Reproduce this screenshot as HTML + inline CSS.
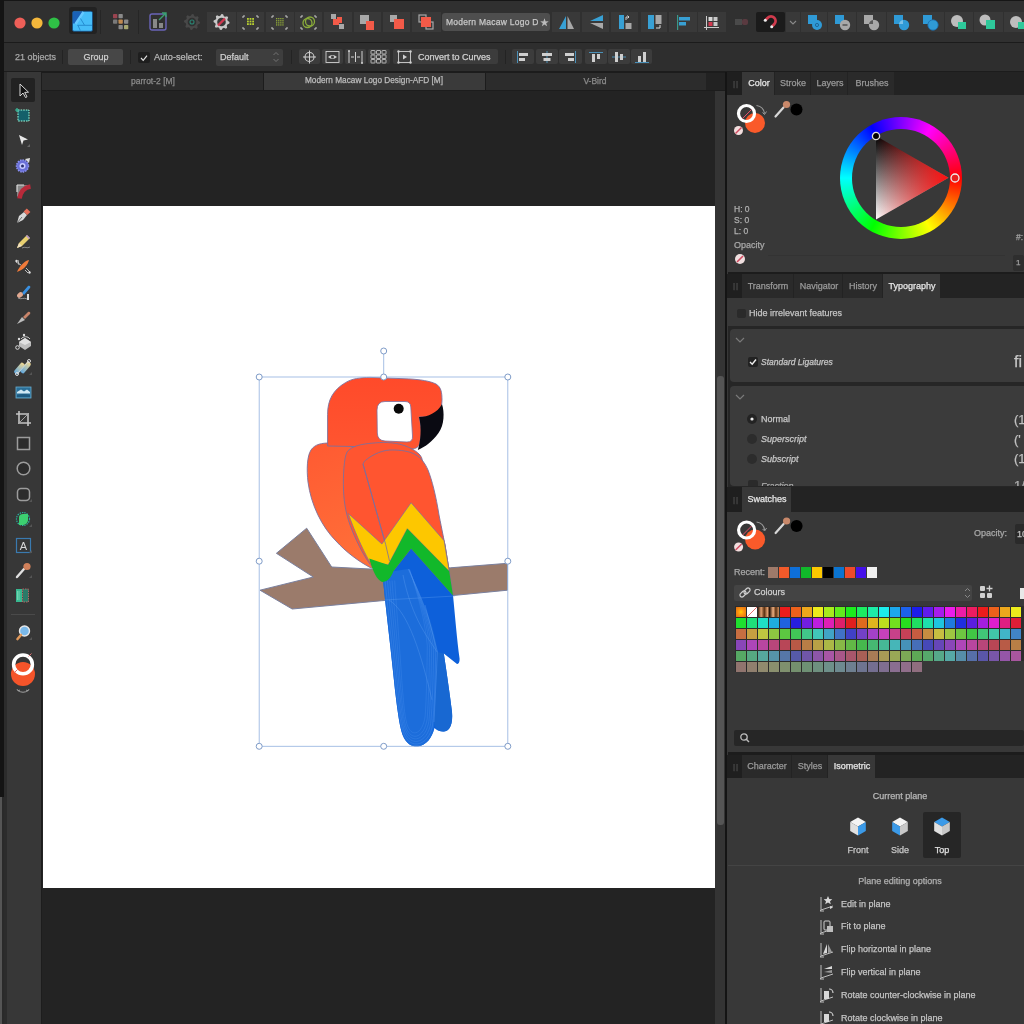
<!DOCTYPE html><html><head><meta charset="utf-8"><style>
html,body{margin:0;padding:0;}
body{width:1024px;height:1024px;overflow:hidden;position:relative;background:#232323;font-family:"Liberation Sans",sans-serif;}
body>div,body>svg{position:absolute;}
.t{white-space:nowrap;line-height:1.2;-webkit-text-stroke:0.25px currentColor;-webkit-font-smoothing:antialiased;will-change:transform;}
</style></head><body>
<div style="left:0px;top:0px;width:1024px;height:43px;background:#303030;"></div>
<div style="left:0px;top:0px;width:1024px;height:1px;background:#161616;"></div>
<div style="left:0px;top:42px;width:1024px;height:1px;background:#1b1b1b;"></div>
<div style="left:0px;top:43px;width:1024px;height:28px;background:#2e2e2e;"></div>
<div style="left:0px;top:71px;width:1024px;height:1.5px;background:#1c1c1c;"></div>
<div style="left:0px;top:0px;width:4px;height:1024px;background:#141414;"></div>
<div style="left:4px;top:72px;width:37px;height:952px;background:#373737;"></div>
<div style="left:4px;top:72px;width:3px;height:952px;background:#2c2c2c;"></div>
<div style="left:0px;top:797px;width:2px;height:227px;background:#555555;"></div>
<div style="left:2px;top:797px;width:2px;height:227px;background:#2a2a2a;"></div>
<div style="left:41px;top:72px;width:1px;height:952px;background:#1d1d1d;"></div>
<div style="left:42px;top:72px;width:684px;height:19px;background:#1c1c1c;"></div>
<div style="left:42px;top:72.5px;width:220.5px;height:17.5px;background:#2c2c2c;"></div>
<div style="left:264px;top:72.5px;width:221px;height:17.5px;background:#3a3a3a;"></div>
<div style="left:486px;top:72.5px;width:220px;height:17.5px;background:#2c2c2c;"></div>
<div style="left:706px;top:72.5px;width:20px;height:17.5px;background:#222222;"></div>
<div class="t" style="left:2.5px;width:300px;text-align:center;top:75.9px;font-size:8.5px;color:#8c8c8c;">parrot-2 [M]</div>
<div class="t" style="left:224px;width:300px;text-align:center;top:76.0px;font-size:8.25px;color:#bcbcbc;">Modern Macaw Logo Design-AFD [M]</div>
<div class="t" style="left:445px;width:300px;text-align:center;top:75.9px;font-size:8.5px;color:#8c8c8c;">V-Bird</div>
<div style="left:42px;top:91px;width:674px;height:933px;background:#232323;"></div>
<div style="left:43px;top:206px;width:672px;height:682px;background:#ffffff;"></div>
<div style="left:715px;top:91px;width:11px;height:933px;background:#343434;"></div>
<div style="left:717px;top:376px;width:7px;height:449px;background:#555555;border-radius:3px;"></div>
<div style="left:725px;top:72px;width:2px;height:952px;background:#141414;"></div>
<div style="left:727px;top:72px;width:297px;height:952px;background:#383838;"></div>
<div style="left:727px;top:72px;width:297px;height:23px;background:#232323;"></div>
<div style="left:727px;top:72px;width:15px;height:23px;background:#1f1f1f;"></div>
<div class="t" style="left:733px;top:78.5px;font-size:8px;color:#4e4e4e;letter-spacing:1px">||</div>
<div style="left:742px;top:72px;width:32px;height:23px;background:#383838;"></div>
<div class="t" style="left:608.5px;width:300px;text-align:center;top:78.1px;font-size:9px;color:#e6e6e6;">Color</div>
<div style="left:775px;top:72px;width:35px;height:23px;background:#2a2a2a;"></div>
<div class="t" style="left:643.0px;width:300px;text-align:center;top:78.1px;font-size:9px;color:#9a9a9a;">Stroke</div>
<div style="left:811px;top:72px;width:36px;height:23px;background:#2a2a2a;"></div>
<div class="t" style="left:679.5px;width:300px;text-align:center;top:78.1px;font-size:9px;color:#9a9a9a;">Layers</div>
<div style="left:848px;top:72px;width:46px;height:23px;background:#2a2a2a;"></div>
<div class="t" style="left:721.5px;width:300px;text-align:center;top:78.1px;font-size:9px;color:#9a9a9a;">Brushes</div>
<div style="left:727px;top:95px;width:297px;height:177px;background:#383838;"></div>
<div style="left:728px;top:272px;width:296px;height:2px;background:#1c1c1c;"></div>
<div style="left:727px;top:274px;width:297px;height:24px;background:#232323;"></div>
<div style="left:727px;top:274px;width:15px;height:24px;background:#1f1f1f;"></div>
<div class="t" style="left:733px;top:281.0px;font-size:8px;color:#4e4e4e;letter-spacing:1px">||</div>
<div style="left:742px;top:274px;width:51px;height:24px;background:#2a2a2a;"></div>
<div class="t" style="left:618.0px;width:300px;text-align:center;top:280.6px;font-size:9px;color:#9a9a9a;">Transform</div>
<div style="left:794px;top:274px;width:48px;height:24px;background:#2a2a2a;"></div>
<div class="t" style="left:668.5px;width:300px;text-align:center;top:280.6px;font-size:9px;color:#9a9a9a;">Navigator</div>
<div style="left:843px;top:274px;width:39px;height:24px;background:#2a2a2a;"></div>
<div class="t" style="left:713.0px;width:300px;text-align:center;top:280.6px;font-size:9px;color:#9a9a9a;">History</div>
<div style="left:883px;top:274px;width:57px;height:24px;background:#383838;"></div>
<div class="t" style="left:762.0px;width:300px;text-align:center;top:280.6px;font-size:9px;color:#e6e6e6;">Typography</div>
<div style="left:727px;top:298px;width:297px;height:28px;background:#383838;"></div>
<div style="left:728px;top:326px;width:296px;height:161px;background:#262626;"></div>
<div style="left:730px;top:329px;width:294px;height:53px;background:#3b3b3b;border-radius:4px 0 0 4px;"></div>
<div style="left:730px;top:386px;width:294px;height:100px;background:#3b3b3b;border-radius:4px 0 0 4px;"></div>
<div style="left:727px;top:487px;width:297px;height:25px;background:#232323;"></div>
<div style="left:727px;top:487px;width:15px;height:25px;background:#1f1f1f;"></div>
<div class="t" style="left:733px;top:494.5px;font-size:8px;color:#4e4e4e;letter-spacing:1px">||</div>
<div style="left:742px;top:487px;width:49px;height:25px;background:#383838;"></div>
<div class="t" style="left:617.0px;width:300px;text-align:center;top:494.1px;font-size:9px;color:#e6e6e6;">Swatches</div>
<div style="left:727px;top:512px;width:297px;height:240px;background:#383838;"></div>
<div style="left:728px;top:752px;width:296px;height:3px;background:#1c1c1c;"></div>
<div style="left:727px;top:755px;width:297px;height:23px;background:#232323;"></div>
<div style="left:727px;top:755px;width:15px;height:23px;background:#1f1f1f;"></div>
<div class="t" style="left:733px;top:761.5px;font-size:8px;color:#4e4e4e;letter-spacing:1px">||</div>
<div style="left:742px;top:755px;width:49px;height:23px;background:#2a2a2a;"></div>
<div class="t" style="left:617.0px;width:300px;text-align:center;top:761.1px;font-size:9px;color:#9a9a9a;">Character</div>
<div style="left:792px;top:755px;width:35px;height:23px;background:#2a2a2a;"></div>
<div class="t" style="left:660.0px;width:300px;text-align:center;top:761.1px;font-size:9px;color:#9a9a9a;">Styles</div>
<div style="left:828px;top:755px;width:47px;height:23px;background:#383838;"></div>
<div class="t" style="left:702.0px;width:300px;text-align:center;top:761.1px;font-size:9px;color:#e6e6e6;">Isometric</div>
<div style="left:727px;top:778px;width:297px;height:246px;background:#383838;"></div>
<div style="left:728px;top:865px;width:296px;height:1px;background:#444444;"></div>
<svg style="left:10px;top:13px;" width="54" height="20" viewBox="0 0 54 20"><circle cx="10" cy="10" r="5.6" fill="#ee5f58"/><circle cx="27" cy="10" r="5.6" fill="#f4b73b"/><circle cx="44" cy="10" r="5.6" fill="#2fc046"/></svg>
<div style="left:68.8px;top:7px;width:28px;height:27px;background:#222222;border-radius:3px;"></div>
<svg style="left:72px;top:10px;" width="21" height="22" viewBox="0 0 21 22"><rect x="0.5" y="1.3" width="20" height="20" rx="1.5" fill="#46bdf8" stroke="#174a80" stroke-width="0.8"/><path d="M1 1.8 L11 1.8 L3 13.5 L1 13.5 Z" fill="#1a62b8"/><path d="M3.5 14 L11.5 2" stroke="#66c8ff" stroke-width="2.4"/><path d="M8.5 8.5 L12.5 15.2 M5.5 15.3 H20 M5.8 15 L8.3 20.5" fill="none" stroke="#2288cc" stroke-width="0.9"/></svg>
<div style="left:100px;top:10px;width:1px;height:24px;background:#262626;"></div>
<svg style="left:113px;top:14px;" width="17" height="17" viewBox="0 0 17 17"><rect x="0.0" y="0.0" width="4.3" height="4.3" rx="0.8" fill="#9a4450"/><rect x="5.5" y="0.0" width="4.3" height="4.3" rx="0.8" fill="#8a8a8a"/><rect x="0.0" y="5.5" width="4.3" height="4.3" rx="0.8" fill="#7a7a7a"/><rect x="5.5" y="5.5" width="4.3" height="4.3" rx="0.8" fill="#c08a50"/><rect x="11.0" y="5.5" width="4.3" height="4.3" rx="0.8" fill="#8a8a8a"/><rect x="5.5" y="11.0" width="4.3" height="4.3" rx="0.8" fill="#8a8a8a"/><rect x="11.0" y="11.0" width="4.3" height="4.3" rx="0.8" fill="#a8a870"/></svg>
<div style="left:138px;top:10px;width:1px;height:24px;background:#262626;"></div>
<svg style="left:149px;top:12px;" width="20" height="20" viewBox="0 0 20 20"><rect x="1" y="2" width="16" height="16" rx="2" fill="none" stroke="#6a64b8" stroke-width="1.4"/><rect x="4" y="7" width="4" height="9" fill="#888"/><rect x="10" y="11" width="4" height="5" fill="#888"/><path d="M10 8 L17 1 M13 1 h4 v4" fill="none" stroke="#3aa070" stroke-width="1.4"/></svg>
<svg style="left:183px;top:13px;" width="18" height="18" viewBox="0 0 18 18"><polygon points="17.00,9.00 16.85,10.56 14.82,11.41 14.24,12.50 14.66,14.66 13.44,15.65 11.41,14.82 10.23,15.18 9.00,17.00 7.44,16.85 6.59,14.82 5.50,14.24 3.34,14.66 2.35,13.44 3.18,11.41 2.82,10.23 1.00,9.00 1.15,7.44 3.18,6.59 3.76,5.50 3.34,3.34 4.56,2.35 6.59,3.18 7.77,2.82 9.00,1.00 10.56,1.15 11.41,3.18 12.50,3.76 14.66,3.34 15.65,4.56 14.82,6.59 15.18,7.77" fill="#484848"/><circle cx="9" cy="9" r="4.3" fill="#303030"/><circle cx="9" cy="9" r="2" fill="none" stroke="#2a8070" stroke-width="1.1"/></svg>
<div style="left:207px;top:12px;width:29px;height:20px;background:#393939;"></div>
<div style="left:236.5px;top:12px;width:27.5px;height:20px;background:#393939;"></div>
<div style="left:265.5px;top:12px;width:28.5px;height:20px;background:#393939;"></div>
<div style="left:295px;top:12px;width:27px;height:20px;background:#393939;"></div>
<div style="left:324px;top:12px;width:28px;height:20px;background:#393939;"></div>
<div style="left:353.5px;top:12px;width:27.5px;height:20px;background:#393939;"></div>
<div style="left:383px;top:12px;width:27px;height:20px;background:#393939;"></div>
<div style="left:412px;top:12px;width:28.5px;height:20px;background:#393939;"></div>
<svg style="left:212px;top:13px;" width="20" height="18" viewBox="0 0 20 18"><polygon points="17.50,9.00 17.35,10.56 15.32,11.41 14.74,12.50 15.16,14.66 13.94,15.65 11.91,14.82 10.73,15.18 9.50,17.00 7.94,16.85 7.09,14.82 6.00,14.24 3.84,14.66 2.85,13.44 3.68,11.41 3.32,10.23 1.50,9.00 1.65,7.44 3.68,6.59 4.26,5.50 3.84,3.34 5.06,2.35 7.09,3.18 8.27,2.82 9.50,1.00 11.06,1.15 11.91,3.18 13.00,3.76 15.16,3.34 16.15,4.56 15.32,6.59 15.68,7.77" fill="#c8c8c8"/><circle cx="9.5" cy="9" r="4.3" fill="#393939"/><line x1="6" y1="12.5" x2="13" y2="5.5" stroke="#d03850" stroke-width="2.4"/></svg>
<svg style="left:241px;top:13px;" width="19" height="19" viewBox="0 0 19 19"><rect x="6.0" y="5.0" width="1.8" height="1.8" fill="#b8d030"/><rect x="6.0" y="7.6" width="1.8" height="1.8" fill="#b8d030"/><rect x="6.0" y="10.2" width="1.8" height="1.8" fill="#b8d030"/><rect x="8.6" y="5.0" width="1.8" height="1.8" fill="#b8d030"/><rect x="8.6" y="7.6" width="1.8" height="1.8" fill="#b8d030"/><rect x="8.6" y="10.2" width="1.8" height="1.8" fill="#b8d030"/><rect x="11.2" y="5.0" width="1.8" height="1.8" fill="#b8d030"/><rect x="11.2" y="7.6" width="1.8" height="1.8" fill="#b8d030"/><rect x="11.2" y="10.2" width="1.8" height="1.8" fill="#b8d030"/><path d="M2 3 h2 M2 3 v2 M17 3 h-2 M17 3 v2 M2 16 h2 M2 16 v-2 M17 16 h-2 M17 16 v-2" stroke="#c8c8c8" stroke-width="1"/></svg>
<svg style="left:270px;top:13px;" width="19" height="19" viewBox="0 0 19 19"><rect x="6.0" y="5.0" width="1.3" height="1.3" fill="#90a838"/><rect x="6.0" y="7.1" width="1.3" height="1.3" fill="#90a838"/><rect x="6.0" y="9.2" width="1.3" height="1.3" fill="#90a838"/><rect x="6.0" y="11.3" width="1.3" height="1.3" fill="#90a838"/><rect x="8.1" y="5.0" width="1.3" height="1.3" fill="#90a838"/><rect x="8.1" y="7.1" width="1.3" height="1.3" fill="#90a838"/><rect x="8.1" y="9.2" width="1.3" height="1.3" fill="#90a838"/><rect x="8.1" y="11.3" width="1.3" height="1.3" fill="#90a838"/><rect x="10.2" y="5.0" width="1.3" height="1.3" fill="#90a838"/><rect x="10.2" y="7.1" width="1.3" height="1.3" fill="#90a838"/><rect x="10.2" y="9.2" width="1.3" height="1.3" fill="#90a838"/><rect x="10.2" y="11.3" width="1.3" height="1.3" fill="#90a838"/><rect x="12.3" y="5.0" width="1.3" height="1.3" fill="#90a838"/><rect x="12.3" y="7.1" width="1.3" height="1.3" fill="#90a838"/><rect x="12.3" y="9.2" width="1.3" height="1.3" fill="#90a838"/><rect x="12.3" y="11.3" width="1.3" height="1.3" fill="#90a838"/><path d="M2 3 h2 M2 3 v2 M17 3 h-2 M17 3 v2 M2 16 h2 M2 16 v-2 M17 16 h-2 M17 16 v-2" stroke="#c8c8c8" stroke-width="1"/></svg>
<svg style="left:299px;top:13px;" width="19" height="19" viewBox="0 0 19 19"><circle cx="8.5" cy="10" r="4.5" fill="none" stroke="#8aac3a" stroke-width="1.3"/><circle cx="11" cy="8.5" r="4.5" fill="none" stroke="#8aac3a" stroke-width="1.3"/><path d="M2 3 h2 M2 3 v2 M17 3 h-2 M17 3 v2 M2 16 h2 M2 16 v-2 M17 16 h-2 M17 16 v-2" stroke="#c8c8c8" stroke-width="1"/></svg>
<svg style="left:328px;top:13px;" width="20" height="18" viewBox="0 0 20 18"><rect x="3" y="1" width="5" height="5" fill="#a8a8a8"/><rect x="5" y="6" width="6" height="6" fill="#f25a48"/><rect x="9" y="4" width="5" height="6" fill="#f25a48"/><rect x="11" y="11" width="5" height="5" fill="#a8a8a8"/></svg>
<svg style="left:357px;top:13px;" width="20" height="18" viewBox="0 0 20 18"><rect x="3" y="2" width="9" height="9" fill="#a8a8a8"/><rect x="9" y="8" width="8" height="9" fill="#f25a48"/></svg>
<svg style="left:387px;top:13px;" width="20" height="18" viewBox="0 0 20 18"><rect x="3" y="2" width="7" height="7" fill="#a8a8a8"/><rect x="7" y="6" width="10" height="10" fill="#f25a48"/></svg>
<svg style="left:416px;top:13px;" width="20" height="18" viewBox="0 0 20 18"><rect x="3" y="2" width="7" height="7" fill="none" stroke="#a8a8a8" stroke-width="1.2"/><rect x="10" y="9" width="7" height="7" fill="none" stroke="#a8a8a8" stroke-width="1.2"/><rect x="5" y="4" width="10" height="10" fill="#f25a48"/></svg>
<div style="left:442.4px;top:13px;width:108px;height:18px;background:#4e4e4e;border-radius:3px;"></div>
<div class="t" style="left:445.5px;top:17.4px;font-size:8.5px;color:#c8c8c8;width:91.5px;overflow:hidden;letter-spacing:0.25px;">Modern Macaw Logo Design</div>
<div class="t" style="left:539.5px;top:16.8px;font-size:9.5px;color:#bdbdbd;">&#9733;</div>
<div style="left:552px;top:12px;width:28px;height:20px;background:#393939;"></div>
<div style="left:582px;top:12px;width:27px;height:20px;background:#393939;"></div>
<div style="left:610.6px;top:12px;width:27.399999999999977px;height:20px;background:#393939;"></div>
<div style="left:640.7px;top:12px;width:26.299999999999955px;height:20px;background:#393939;"></div>
<div style="left:669px;top:12px;width:28px;height:20px;background:#393939;"></div>
<div style="left:698px;top:12px;width:28px;height:20px;background:#393939;"></div>
<svg style="left:552px;top:12px;" width="28" height="20" viewBox="0 0 28 20"><path d="M14 4 L14 17 L7 17 Z" fill="#38a0d4"/><path d="M15.5 4 L15.5 17 L22 17 Z" fill="#a8a8a8"/></svg>
<svg style="left:582px;top:12px;" width="27" height="20" viewBox="0 0 27 20"><path d="M21 3 L21 9 L8 9 Z" fill="#38a0d4"/><path d="M21 11 L21 17 L8 11 Z" fill="#a8a8a8"/></svg>
<svg style="left:610.6px;top:12px;" width="28" height="20" viewBox="0 0 28 20"><rect x="8" y="3" width="5" height="14" fill="#38a0d4"/><rect x="14.5" y="11" width="6" height="6" fill="#a8a8a8"/><path d="M15 8 v-3 h3 l-1.5 -1.5 M18 5 l-1.5 1.5" fill="none" stroke="#ddd" stroke-width="0.9"/></svg>
<svg style="left:640.7px;top:12px;" width="27" height="20" viewBox="0 0 27 20"><rect x="7" y="3" width="6" height="14" fill="#38a0d4"/><rect x="14.5" y="3" width="6" height="9" fill="#a8a8a8"/><path d="M19 13 v3 h-4" fill="none" stroke="#ddd" stroke-width="1"/></svg>
<svg style="left:669px;top:12px;" width="28" height="20" viewBox="0 0 28 20"><rect x="8" y="3" width="1.2" height="15" fill="#3a9a8a"/><rect x="10" y="5" width="11" height="3.5" fill="#38a0d4"/><rect x="10" y="10" width="7" height="3.5" fill="#38a0d4"/></svg>
<svg style="left:698px;top:12px;" width="28" height="20" viewBox="0 0 28 20"><rect x="8" y="4" width="1" height="14" fill="#ccc"/><rect x="6" y="15" width="15" height="1" fill="#ccc"/><rect x="10.5" y="5" width="4" height="4" fill="#d8d8d8"/><rect x="15.5" y="5" width="4" height="4" fill="#c8c8c8"/><rect x="10.5" y="10" width="4" height="4" fill="#d03a50"/><rect x="15.5" y="10" width="4" height="4" fill="#c8c8c8"/></svg>
<svg style="left:733px;top:15px;" width="18" height="14" viewBox="0 0 18 14"><rect x="2" y="4" width="7" height="6" fill="#4a4a4a"/><rect x="9" y="4" width="6" height="6" rx="2" fill="#5a3a40"/></svg>
<div style="left:756px;top:12px;width:29px;height:20px;background:#1b1b1b;border-radius:2px;"></div>
<svg style="left:760px;top:12px;" width="22" height="20" viewBox="0 0 22 20"><path d="M5.7 7.9 L7.8 5.8 A4.5 4.5 0 0 1 14.2 12.2 L12.1 14.3" fill="none" stroke="#d03a4c" stroke-width="2.8"/><circle cx="5.3" cy="8.3" r="1.5" fill="#eee"/><circle cx="11.7" cy="14.7" r="1.5" fill="#eee"/></svg>
<div style="left:786px;top:12px;width:14px;height:20px;background:#393939;"></div>
<svg style="left:788px;top:17px;" width="10" height="10" viewBox="0 0 10 10"><path d="M2 4 L5 7 L8 4" fill="none" stroke="#8a8a8a" stroke-width="1.1"/></svg>
<div style="left:801px;top:12px;width:26px;height:20px;background:#393939;"></div>
<div style="left:828px;top:12px;width:28px;height:20px;background:#393939;"></div>
<div style="left:857px;top:12px;width:29px;height:20px;background:#393939;"></div>
<div style="left:887px;top:12px;width:28.5px;height:20px;background:#393939;"></div>
<div style="left:916px;top:12px;width:28px;height:20px;background:#393939;"></div>
<div style="left:945px;top:12px;width:28px;height:20px;background:#393939;"></div>
<div style="left:973.5px;top:12px;width:29.5px;height:20px;background:#393939;"></div>
<div style="left:1004px;top:12px;width:26px;height:20px;background:#393939;"></div>
<svg style="left:801px;top:12px;" width="26" height="20" viewBox="0 0 26 20"><rect x="7" y="3" width="9" height="9" fill="#2f9ad6"/><circle cx="16" cy="13" r="5" fill="#2f9ad6"/><circle cx="16" cy="13" r="1.6" fill="none" stroke="#1a5a8a" stroke-width="0.8"/></svg>
<svg style="left:828px;top:12px;" width="28" height="20" viewBox="0 0 28 20"><rect x="7" y="3" width="9" height="9" fill="#2f9ad6"/><circle cx="17" cy="13" r="5.2" fill="#a8a8a8"/><line x1="14.5" y1="13" x2="19.5" y2="13" stroke="#333" stroke-width="1.1"/></svg>
<svg style="left:857px;top:12px;" width="29" height="20" viewBox="0 0 29 20"><rect x="7" y="3" width="9" height="9" fill="#a8a8a8"/><circle cx="17" cy="13" r="5.2" fill="#a8a8a8"/><path d="M12 12 L16 12 L16 8 A5.2 5.2 0 0 0 12 12Z" fill="#5a5a5a"/></svg>
<svg style="left:887px;top:12px;" width="28" height="20" viewBox="0 0 28 20"><rect x="7" y="3" width="9" height="9" fill="#2f9ad6"/><circle cx="17" cy="13" r="5.2" fill="#2f9ad6"/><path d="M12 12 L16 12 L16 8 A5.2 5.2 0 0 0 12 12Z" fill="#7ac0e8"/></svg>
<svg style="left:916px;top:12px;" width="28" height="20" viewBox="0 0 28 20"><rect x="7" y="3" width="9" height="9" fill="#2f9ad6"/><circle cx="17" cy="13" r="5.2" fill="#2f9ad6"/><circle cx="17" cy="13" r="5.2" fill="none" stroke="#1a6aa8" stroke-width="0.8"/></svg>
<svg style="left:945px;top:12px;" width="28" height="20" viewBox="0 0 28 20"><circle cx="12" cy="9" r="6" fill="#bdbdbd"/><rect x="13" y="10" width="8" height="7" fill="#2ec89a"/></svg>
<svg style="left:973.5px;top:12px;" width="29" height="20" viewBox="0 0 29 20"><circle cx="11" cy="8" r="5.5" fill="#bdbdbd"/><rect x="12" y="8" width="9" height="9" fill="#2ec89a"/></svg>
<svg style="left:1004px;top:12px;" width="20" height="20" viewBox="0 0 20 20"><circle cx="12" cy="10" r="6" fill="#bdbdbd"/><rect x="14" y="10" width="8" height="7" fill="#2ec89a"/></svg>
<div class="t" style="left:14.6px;top:52.1px;font-size:9px;color:#a8a8a8;">21 objects</div>
<div style="left:62px;top:50px;width:1px;height:14px;background:#232323;"></div>
<div style="left:68px;top:49px;width:55px;height:16px;background:#474747;border-radius:2px;"></div>
<div class="t" style="left:-54.5px;width:300px;text-align:center;top:51.9px;font-size:9px;color:#cfcfcf;">Group</div>
<div style="left:130px;top:50px;width:1px;height:14px;background:#232323;"></div>
<div style="left:138px;top:51.7px;width:11.5px;height:11.5px;background:#1e1e1e;border-radius:2px;"></div>
<svg style="left:138px;top:51.7px;" width="12" height="12" viewBox="0 0 12 12"><path d="M3 6 L5.2 8.3 L9 3.6" fill="none" stroke="#e0e0e0" stroke-width="1.2"/></svg>
<div class="t" style="left:154px;top:52.0px;font-size:9.2px;color:#b8b8b8;">Auto-select:</div>
<div style="left:216px;top:49px;width:67px;height:17px;background:#3e3e3e;border-radius:2px;"></div>
<div class="t" style="left:220px;top:51.6px;font-size:9px;color:#cfcfcf;">Default</div>
<svg style="left:271px;top:50px;" width="10" height="14" viewBox="0 0 10 14"><path d="M2.5 5 L5 2.5 L7.5 5 M2.5 9 L5 11.5 L7.5 9" fill="none" stroke="#777" stroke-width="0.9"/></svg>
<div style="left:291px;top:50px;width:1px;height:14px;background:#232323;"></div>
<div style="left:299px;top:48.6px;width:21px;height:15.6px;background:#3c3c3c;border-radius:2px;"></div>
<div style="left:322px;top:48.6px;width:21px;height:15.6px;background:#3c3c3c;border-radius:2px;"></div>
<div style="left:345px;top:48.6px;width:21px;height:15.6px;background:#3c3c3c;border-radius:2px;"></div>
<div style="left:368px;top:48.6px;width:22px;height:15.6px;background:#3c3c3c;border-radius:2px;"></div>
<div style="left:393px;top:48.6px;width:104.5px;height:15.6px;background:#3c3c3c;border-radius:2px;"></div>
<svg style="left:299px;top:48.6px;" width="21" height="16" viewBox="0 0 21 16"><circle cx="10.5" cy="8" r="4.5" fill="none" stroke="#d0d0d0" stroke-width="1.1"/><path d="M10.5 1.5 v13 M4 8 h13" stroke="#d0d0d0" stroke-width="1"/></svg>
<svg style="left:322px;top:48.6px;" width="21" height="16" viewBox="0 0 21 16"><rect x="4" y="2.5" width="13" height="11" fill="none" stroke="#d0d0d0" stroke-width="0.9"/><path d="M6 8 Q10.5 4 15 8 Q10.5 12 6 8Z" fill="#d0d0d0"/><circle cx="10.5" cy="8" r="1.5" fill="#3c3c3c"/></svg>
<svg style="left:345px;top:48.6px;" width="21" height="16" viewBox="0 0 21 16"><path d="M4 2 v12 M17 2 v12 M10.5 3 v10" stroke="#d0d0d0" stroke-width="1" /><path d="M6 8 h3 M12 8 h3" stroke="#d0d0d0" stroke-width="1"/><circle cx="4" cy="2" r="1" fill="#d0d0d0"/><circle cx="17" cy="14" r="1" fill="#d0d0d0"/></svg>
<svg style="left:368px;top:48.6px;" width="22" height="16" viewBox="0 0 22 16"><rect x="3.0" y="1.5" width="4" height="3.5" rx="0.5" fill="none" stroke="#d0d0d0" stroke-width="0.8"/><rect x="3.0" y="6.0" width="4" height="3.5" rx="0.5" fill="none" stroke="#d0d0d0" stroke-width="0.8"/><rect x="3.0" y="10.5" width="4" height="3.5" rx="0.5" fill="none" stroke="#d0d0d0" stroke-width="0.8"/><rect x="8.5" y="1.5" width="4" height="3.5" rx="0.5" fill="none" stroke="#d0d0d0" stroke-width="0.8"/><rect x="8.5" y="6.0" width="4" height="3.5" rx="0.5" fill="none" stroke="#d0d0d0" stroke-width="0.8"/><rect x="8.5" y="10.5" width="4" height="3.5" rx="0.5" fill="none" stroke="#d0d0d0" stroke-width="0.8"/><rect x="14.0" y="1.5" width="4" height="3.5" rx="0.5" fill="none" stroke="#d0d0d0" stroke-width="0.8"/><rect x="14.0" y="6.0" width="4" height="3.5" rx="0.5" fill="none" stroke="#d0d0d0" stroke-width="0.8"/><rect x="14.0" y="10.5" width="4" height="3.5" rx="0.5" fill="none" stroke="#d0d0d0" stroke-width="0.8"/></svg>
<svg style="left:395px;top:48.6px;" width="20" height="16" viewBox="0 0 20 16"><rect x="3.5" y="2.5" width="12" height="11" fill="none" stroke="#d0d0d0" stroke-width="0.9"/><path d="M8 5.5 L12 8 L8 10.5Z" fill="#d0d0d0"/><circle cx="3.5" cy="2.5" r="1.2" fill="#d0d0d0"/><circle cx="15.5" cy="2.5" r="1.2" fill="#d0d0d0"/><circle cx="3.5" cy="13.5" r="1.2" fill="#d0d0d0"/><circle cx="15.5" cy="13.5" r="1.2" fill="#d0d0d0"/></svg>
<div class="t" style="left:418px;top:51.6px;font-size:9px;color:#d0d0d0;">Convert to Curves</div>
<div style="left:504.6px;top:50px;width:1px;height:14px;background:#232323;"></div>
<div style="left:512px;top:48.6px;width:22px;height:15.6px;background:#3c3c3c;border-radius:2px;"></div>
<div style="left:536px;top:48.6px;width:22px;height:15.6px;background:#3c3c3c;border-radius:2px;"></div>
<div style="left:559px;top:48.6px;width:23px;height:15.6px;background:#3c3c3c;border-radius:2px;"></div>
<div style="left:585px;top:48.6px;width:22px;height:15.6px;background:#3c3c3c;border-radius:2px;"></div>
<div style="left:607.5px;top:48.6px;width:22.5px;height:15.6px;background:#3c3c3c;border-radius:2px;"></div>
<div style="left:631px;top:48.6px;width:21px;height:15.6px;background:#3c3c3c;border-radius:2px;"></div>
<svg style="left:512px;top:48.6px;" width="22" height="16" viewBox="0 0 22 16"><rect x="5" y="2" width="1" height="12" fill="#4a90b8"/><rect x="7" y="4" width="9" height="3" fill="#cfcfcf"/><rect x="7" y="9" width="6" height="3" fill="#cfcfcf"/></svg>
<svg style="left:536px;top:48.6px;" width="22" height="16" viewBox="0 0 22 16"><rect x="10.5" y="2" width="1" height="12" fill="#4a90b8"/><rect x="6" y="4" width="10" height="3" fill="#cfcfcf"/><rect x="7.5" y="9" width="7" height="3" fill="#cfcfcf"/></svg>
<svg style="left:559px;top:48.6px;" width="23" height="16" viewBox="0 0 23 16"><rect x="16" y="2" width="1" height="12" fill="#4a90b8"/><rect x="6" y="4" width="9" height="3" fill="#cfcfcf"/><rect x="9" y="9" width="6" height="3" fill="#cfcfcf"/></svg>
<svg style="left:585px;top:48.6px;" width="22" height="16" viewBox="0 0 22 16"><rect x="4" y="3" width="14" height="1" fill="#4a90b8"/><rect x="7" y="5" width="3" height="8" fill="#cfcfcf"/><rect x="12" y="5" width="3" height="5" fill="#cfcfcf"/></svg>
<svg style="left:607.5px;top:48.6px;" width="22" height="16" viewBox="0 0 22 16"><rect x="4" y="7.5" width="14" height="1" fill="#4a90b8"/><rect x="7" y="3" width="3" height="10" fill="#cfcfcf"/><rect x="12" y="5" width="3" height="6" fill="#cfcfcf"/></svg>
<svg style="left:631px;top:48.6px;" width="21" height="16" viewBox="0 0 21 16"><rect x="4" y="13" width="14" height="1" fill="#4a90b8"/><rect x="7" y="7" width="3" height="6" fill="#cfcfcf"/><rect x="12" y="3" width="3" height="10" fill="#cfcfcf"/></svg>
<div style="left:11px;top:78px;width:24px;height:23.5px;background:#222222;border-radius:2px;"></div>
<svg style="left:14.0px;top:80.5px;" width="18" height="18" viewBox="0 0 18 18"><path d="M6 3 L6 15 L9 12 L11.5 16.5 L13 15.8 L10.7 11.4 L14.5 11.2 Z" fill="#111" stroke="#d8d8d8" stroke-width="1"/></svg>
<svg style="left:14.0px;top:105.6px;" width="18" height="18" viewBox="0 0 18 18"><rect x="4" y="4" width="11" height="11" fill="#14606a" stroke="#9fd" stroke-width="1" stroke-dasharray="1.6 1"/><path d="M1 4 h4 M3 2 v4" stroke="#3ac0a0" stroke-width="1.2"/></svg>
<svg style="left:14.0px;top:131.3px;" width="18" height="18" viewBox="0 0 18 18"><path d="M5 4 L14 8.5 L9.5 9.5 L8 14 Z" fill="#e8e8e8"/><path d="M13 16 L16 13 L16 16Z" fill="#666"/></svg>
<svg style="left:14.0px;top:156.2px;" width="18" height="18" viewBox="0 0 18 18"><circle cx="8.5" cy="10" r="6" fill="#6a70d8" stroke="#8a90f0" stroke-width="1.5" stroke-dasharray="1.5 1"/><circle cx="8.5" cy="10" r="3" fill="#c8ccff"/><circle cx="8.5" cy="10" r="1.5" fill="#2a2f70"/><path d="M11 3 L16 2 L15 7Z" fill="#ddd"/></svg>
<svg style="left:14.0px;top:181.8px;" width="18" height="18" viewBox="0 0 18 18"><path d="M3 3 L3 15 L8 10 C9 7 11 5 16 3 Z" fill="#888" /><path d="M3 3 h7 M3 3 v7" stroke="#ddd" stroke-width="1.2"/><path d="M5.5 16.5 C6.5 10 10.5 5.5 16.5 4.5" fill="none" stroke="#b82a3a" stroke-width="4.6"/></svg>
<svg style="left:14.0px;top:206.7px;" width="18" height="18" viewBox="0 0 18 18"><path d="M3 16 L5 9 L10 5 L13 8 L9 13 Z" fill="#d8d8d8"/><path d="M3 16 L8 10" stroke="#555" stroke-width="0.8"/><rect x="10.5" y="2.5" width="5" height="4.5" transform="rotate(45 13 4.75)" fill="#e8705a"/></svg>
<svg style="left:14.0px;top:231.6px;" width="18" height="18" viewBox="0 0 18 18"><path d="M3 16 L5 11 L13 3 L16 6 L8 14 Z" fill="#e8d070"/><path d="M3 16 L5 11 L8 14Z" fill="#f0e0c0"/><path d="M13 3 L16 6 L15 7 L12 4Z" fill="#b090d0"/><path d="M8 16 C11 14 13 17 16 15" fill="none" stroke="#999" stroke-width="0.8"/></svg>
<svg style="left:14.0px;top:257.0px;" width="18" height="18" viewBox="0 0 18 18"><path d="M3 15 C5 10 10 4 15 3 C14 8 9 13 3 15Z" fill="#f07a3a"/><path d="M2 5 L7 8 M4 3 L5 8 M12 11 L16 15 M11 13 L14 16" stroke="#bbb" stroke-width="1"/><circle cx="2.5" cy="4" r="1.2" fill="#ddd"/><circle cx="15.5" cy="15.5" r="1.2" fill="#ddd"/></svg>
<svg style="left:14.0px;top:283.0px;" width="18" height="18" viewBox="0 0 18 18"><path d="M8 10 L14 3 C16 2 17 4 16 5 L10 12Z" fill="#3a90e0"/><ellipse cx="6" cy="12" rx="3.2" ry="2.4" transform="rotate(-40 6 12)" fill="#e0a890"/><path d="M4 15 C7 17 10 14 13 16" fill="none" stroke="#aaa" stroke-width="0.8"/><rect x="13" y="11" width="2" height="6" fill="#ddd"/></svg>
<svg style="left:14.0px;top:308.0px;" width="18" height="18" viewBox="0 0 18 18"><path d="M9 9 L14 4 C15.5 3 17 4.5 16 6 L11 11Z" fill="#c8846a"/><path d="M3 16 L8 9 L11 12 Z" fill="#bdbdbd"/></svg>
<svg style="left:14.0px;top:333.0px;" width="18" height="18" viewBox="0 0 18 18"><path d="M5 9 L11 5 L17 9 L17 13 L11 17 L5 13 Z" fill="#bdbdbd"/><path d="M5 9 L11 5 L17 9 L11 12Z" fill="#e0e0e0"/><path d="M7 6 C9 3 14 3 16 6" fill="none" stroke="#ccc" stroke-width="1"/><circle cx="3.5" cy="14.5" r="1.8" fill="none" stroke="#ddd" stroke-width="1"/><circle cx="5" cy="6" r="1.2" fill="#ddd"/><circle cx="10" cy="2" r="1.2" fill="#ddd"/></svg>
<svg style="left:14.0px;top:358.0px;" width="18" height="18" viewBox="0 0 18 18"><defs><linearGradient id="tg1" x1="0" y1="0" x2="0" y2="1"><stop offset="0" stop-color="#f0d890"/><stop offset="1" stop-color="#60a8e0"/></linearGradient></defs><rect x="3" y="4" width="5" height="13" rx="2" transform="rotate(40 5.5 10.5)" fill="url(#tg1)"/><rect x="9" y="3" width="5" height="13" rx="2" transform="rotate(40 11.5 9.5)" fill="url(#tg1)"/><path d="M3 16 L15 3" stroke="#ddd" stroke-width="0.8"/><circle cx="3" cy="16" r="1.5" fill="none" stroke="#ddd"/><circle cx="15" cy="3" r="1.5" fill="none" stroke="#ddd"/><path d="M15 17 L18 14 L18 17Z" fill="#555"/></svg>
<svg style="left:14.0px;top:383.0px;" width="18" height="18" viewBox="0 0 18 18"><rect x="2" y="4" width="15" height="11" fill="#2a6f98" stroke="#6aaed0" stroke-width="0.8"/><path d="M3 9 L7 6.5 L10 8.5 L13 6.5 L16 9 V10.5 H3Z" fill="#cfe8f4"/><path d="M3 12 Q9.5 10 16 12 V14 H3Z" fill="#1e5a80"/></svg>
<svg style="left:14.0px;top:408.5px;" width="18" height="18" viewBox="0 0 18 18"><path d="M5 2 V14 H17 M2 5 H14 V17" fill="none" stroke="#c4c4c4" stroke-width="1.6"/><path d="M4 15 L15 4" stroke="#b0b0b0" stroke-width="0.9"/></svg>
<svg style="left:14.0px;top:434.0px;" width="18" height="18" viewBox="0 0 18 18"><rect x="3.5" y="3.5" width="12" height="12" fill="#2c2c2c" stroke="#9c9c9c" stroke-width="1.5"/></svg>
<svg style="left:14.0px;top:459.0px;" width="18" height="18" viewBox="0 0 18 18"><circle cx="9.5" cy="9.5" r="6.3" fill="#2c2c2c" stroke="#9c9c9c" stroke-width="1.5"/></svg>
<svg style="left:14.0px;top:484.5px;" width="18" height="18" viewBox="0 0 18 18"><rect x="3.5" y="3.5" width="12" height="12" rx="3.5" fill="#2c2c2c" stroke="#9c9c9c" stroke-width="1.5"/><path d="M15 17 L18 14 L18 17Z" fill="#555"/></svg>
<svg style="left:14.0px;top:510.0px;" width="18" height="18" viewBox="0 0 18 18"><circle cx="9" cy="9" r="6.5" fill="none" stroke="#2ab0a0" stroke-width="1.2" stroke-dasharray="1.4 1"/><path d="M5 7 C5 5 7 4 9 4 L14 4 L14 10 C14 13 11 15 8 15 L5 15Z" fill="#3cd070"/><path d="M15 17 L18 14 L18 17Z" fill="#555"/></svg>
<svg style="left:14.0px;top:535.5px;" width="18" height="18" viewBox="0 0 18 18"><rect x="2.5" y="2.5" width="14" height="14" fill="none" stroke="#3a7ab0" stroke-width="1.2"/><text x="9.5" y="14" font-family="Liberation Sans" font-size="11" fill="#d8d8d8" text-anchor="middle">A</text><path d="M15 17 L18 14 L18 17Z" fill="#555"/></svg>
<svg style="left:14.0px;top:560.5px;" width="18" height="18" viewBox="0 0 18 18"><path d="M3 16 L10 8" stroke="#e0e0e0" stroke-width="2.4" stroke-linecap="round"/><circle cx="13" cy="5.5" r="3.6" fill="#d0805a"/><path d="M15 17 L18 14 L18 17Z" fill="#555"/></svg>
<svg style="left:14.0px;top:586.0px;" width="18" height="18" viewBox="0 0 18 18"><rect x="2" y="3" width="6" height="13" fill="#38b890"/><rect x="8.5" y="3" width="6" height="13" fill="#2a7a68" stroke="#d06a6a" stroke-width="0.8" stroke-dasharray="1.5 1"/><path d="M3.5 5 v9 M5 5 v9" stroke="#a8f0d0" stroke-width="0.5"/></svg>
<div style="left:11px;top:614px;width:24px;height:1px;background:#4a4a4a;"></div>
<svg style="left:14.0px;top:623.0px;" width="18" height="18" viewBox="0 0 18 18"><circle cx="10.5" cy="8" r="5" fill="#7ab8e8" stroke="#e8e8e8" stroke-width="1.4"/><path d="M3.5 16 L7 12" stroke="#e0985a" stroke-width="2.6" stroke-linecap="round"/><path d="M15 17 L18 14 L18 17Z" fill="#555"/></svg>
<svg style="left:8px;top:648px;" width="30" height="50" viewBox="0 0 30 50"><circle cx="15" cy="26" r="12" fill="#f5542a"/><circle cx="15" cy="16.4" r="9.4" fill="none" stroke="#ffffff" stroke-width="3.5"/><path d="M20.5 8.5 L23.5 5.5 M6.5 24.5 L9.5 21.5" stroke="#e07070" stroke-width="1"/><path d="M10 42.5 Q15 46 20 42.5" fill="none" stroke="#aaa" stroke-width="0.9"/><path d="M9 41 L10 43 L12 42 M18 42 L20 43 L21 41" fill="none" stroke="#aaa" stroke-width="0.8"/></svg>
<svg style="left:240px;top:330px" width="300" height="430" viewBox="240 330 300 430"><defs><linearGradient id="gw" x1="0" y1="0" x2="0.3" y2="1"><stop offset="0" stop-color="#ff5a32"/><stop offset="1" stop-color="#ff6e38"/></linearGradient><linearGradient id="gh" x1="0" y1="0" x2="0" y2="1"><stop offset="0" stop-color="#ff4a2a"/><stop offset="1" stop-color="#ff5530"/></linearGradient></defs><polygon points="260,590.2 292.2,609 381.8,600.7 453,595.5 507.5,590.2 507.5,563.3 450.4,567.8 370,569 331.7,567 306.7,528.2 276.4,553.3 313.3,577" fill="#9b7b6b" stroke="#7a809e" stroke-width="1"/><path d="M330,443 C322,443 315,444 311,450 C307,456 306.5,470 308,482 C311,505 322,527 336,541 C346,552 358,561 371,568 L390,566 L372,450 Z" fill="url(#gw)" stroke="#7d6f9c" stroke-width="0.9"/><path d="M327.6,446 L327.6,414.4 C327.6,400 333,390 345.4,382.7 C352,378.5 360,377.6 370,377.4 L408.9,378.9 C420,379.5 430,381 436,384 C441,387 442,392 442,400.5 C442,410 437,416 428,417 L419,417 C421.5,425 422,435 420,442 C419.2,447 416,449 411,449 L380,447 Z" fill="url(#gh)" stroke="#7d6f9c" stroke-width="0.9"/><path d="M385,401.5 L405,401.5 Q410.5,401.5 410.8,407 L412.5,436 Q413,442 407,442 L385,441 Q377.5,440.5 377.3,433 L377,410 Q377,401.5 385,401.5 Z" fill="#ffffff" stroke="#7d6f9c" stroke-width="0.8"/><circle cx="398.7" cy="408.7" r="5" fill="#080808"/><path d="M419.5,417 C428,417 437,413 442,404.3 C444.5,412 444.5,425 438.5,433 C432,442 425,447 417.8,450 C420.5,442 422,428 419,417 Z" fill="#0a0a12"/><path d="M347,452 C352,446 360,443.5 383.5,442.4 C395,442.4 405,445 411.4,448.7 C416,451 420,454 421.6,457.6 L445,545 L449.2,571.2 L373,567.8 C366,560 358,545 352,530 C347,518 344,505 343.5,490 C343,475 344,458 347,452 Z" fill="#ff5530" stroke="#7d6f9c" stroke-width="0.9"/><path d="M363,464 C364,461 366,459.9 370,457 C378,452 385,450 392,450 C400,450 410,451 416,455 C421,458 425,463 428,470 C432,480 436,496 439,515 C442,530 444,540 445,545 L449.2,571.2 L453,595.4 L411.1,548.4 L403.5,566.2 L389.5,561 L385.7,544.6 Z" fill="#ff5530" stroke="#7d6f9c" stroke-width="0.9"/><path d="M383.1,581 L393.3,571.2 L411.1,548.4 L453,595.4 C455,615 457,640 459.6,658.7 C459.8,662 458.5,664 457,664 L443.8,653.5 C447,675 450,695 452,712 C453,724 450,731 444,731.5 C440,731.8 436,730 434.5,728 C432,738 426,745.5 418,746.5 C413,747 408,745 404,738 C400,730 398,715 395,690 C391,650 386,610 383.1,581 Z" fill="#0d60da"/><path d="M383.1,581 C386,610 391,650 395,690 C398,715 400,730 404,738 C408,745 413,747 418,746.5 C426,745.5 432,738 434,728 C436,710 437,680 437.5,652 C436,640 433,630 430,620 C423,600 416,585 408,569 L393.3,571.2 Z" fill="#1c6ddb"/><path d="M437.5,652 L443.8,653.5 C447,675 450,695 452,712 C453,724 450,731 444,731.5 C438,732 434.5,728 434,722 C436,700 437,675 437.5,652 Z" fill="#1868d2"/><path transform="translate(28.84 8.63) scale(0.93 0.985)" d="M383.1,581 C386,610 391,650 395,690 C398,715 400,730 404,738 C408,745 413,747 418,746.5 C426,745.5 432,738 434,728 C436,710 437,680 437.5,652 C436,640 433,630 430,620 C423,600 416,585 408,569" fill="none" stroke="#4f94f0" stroke-width="0.6" opacity="0.6"/><path transform="translate(61.80 17.25) scale(0.85 0.97)" d="M383.1,581 C386,610 391,650 395,690 C398,715 400,730 404,738 C408,745 413,747 418,746.5 C426,745.5 432,738 434,728 C436,710 437,680 437.5,652 C436,640 433,630 430,620 C423,600 416,585 408,569" fill="none" stroke="#4f94f0" stroke-width="0.6" opacity="0.6"/><path transform="translate(94.76 25.88) scale(0.77 0.955)" d="M383.1,581 C386,610 391,650 395,690 C398,715 400,730 404,738 C408,745 413,747 418,746.5 C426,745.5 432,738 434,728 C436,710 437,680 437.5,652 C436,640 433,630 430,620 C423,600 416,585 408,569" fill="none" stroke="#4f94f0" stroke-width="0.6" opacity="0.6"/><path transform="translate(127.72 34.50) scale(0.69 0.94)" d="M383.1,581 C386,610 391,650 395,690 C398,715 400,730 404,738 C408,745 413,747 418,746.5 C426,745.5 432,738 434,728 C436,710 437,680 437.5,652 C436,640 433,630 430,620 C423,600 416,585 408,569" fill="none" stroke="#4f94f0" stroke-width="0.6" opacity="0.6"/><path transform="translate(164.80 46.00) scale(0.6 0.92)" d="M383.1,581 C386,610 391,650 395,690 C398,715 400,730 404,738 C408,745 413,747 418,746.5 C426,745.5 432,738 434,728 C436,710 437,680 437.5,652 C436,640 433,630 430,620 C423,600 416,585 408,569" fill="none" stroke="#4f94f0" stroke-width="0.6" opacity="0.6"/><path d="M403,575 C412,620 430,640 437,652" fill="none" stroke="#5a9af0" stroke-width="0.7" opacity="0.55"/><path d="M389,600 C405,610 418,640 432,700" fill="none" stroke="#5a9af0" stroke-width="0.7" opacity="0.55"/><path d="M384,600 L455,596" fill="none" stroke="#5a9af0" stroke-width="0.7" opacity="0.55"/><path d="M425,605 L437.5,652 L434,722" fill="none" stroke="#5a9af0" stroke-width="0.7" opacity="0.55"/><path d="M348.3,513.5 L381.9,544 L411.1,502.7 L444.1,540.8 L449.2,571.2 L407.3,528.7 L388.2,564.9 L369.2,561 C362,548 354,530 348.3,513.5 Z" fill="#fdc700" stroke="#7d6f9c" stroke-width="0.7"/><path d="M369.2,558.6 L388.2,564.9 L407.3,528.7 L449.2,571.2 L453,595.4 L411.1,548.4 L393.3,571.2 C391,578 387,582 382,582 C377,580 373,572 369.2,558.6 Z" fill="#12b82a"/><path d="M363,464 L385.7,544.6 L389.5,561" fill="none" stroke="#7d6f9c" stroke-width="0.8"/><rect x="259.2" y="377" width="248.6" height="369.3" fill="none" stroke="#9db9e2" stroke-width="0.9"/><line x1="383.7" y1="351" x2="383.7" y2="377" stroke="#9db9e2" stroke-width="0.9"/><circle cx="259.2" cy="377" r="3" fill="#ffffff" stroke="#7f9cc8" stroke-width="1"/><circle cx="383.7" cy="377" r="3" fill="#ffffff" stroke="#7f9cc8" stroke-width="1"/><circle cx="507.8" cy="377" r="3" fill="#ffffff" stroke="#7f9cc8" stroke-width="1"/><circle cx="259.2" cy="561.2" r="3" fill="#ffffff" stroke="#7f9cc8" stroke-width="1"/><circle cx="507.8" cy="561.2" r="3" fill="#ffffff" stroke="#7f9cc8" stroke-width="1"/><circle cx="259.2" cy="746.3" r="3" fill="#ffffff" stroke="#7f9cc8" stroke-width="1"/><circle cx="383.7" cy="746.3" r="3" fill="#ffffff" stroke="#7f9cc8" stroke-width="1"/><circle cx="507.8" cy="746.3" r="3" fill="#ffffff" stroke="#7f9cc8" stroke-width="1"/><circle cx="383.7" cy="351" r="3" fill="#ffffff" stroke="#7f9cc8" stroke-width="1"/></svg>
<svg style="left:728px;top:92px;" width="100" height="50" viewBox="0 0 100 50"><circle cx="27.0" cy="31.0" r="10" fill="#fa5a2a"/><circle cx="18.5" cy="21.5" r="8" fill="none" stroke="#ffffff" stroke-width="3.2"/><line x1="14.5" y1="26.5" x2="23.5" y2="17.5" stroke="#e0506a" stroke-width="1"/><circle cx="10.5" cy="38.5" r="4.5" fill="#f2dede"/><line x1="7.5" y1="41.5" x2="13.5" y2="35.5" stroke="#d04a60" stroke-width="1.4"/><path d="M28.5 13.5 q7 1 8 8" fill="none" stroke="#9a9a9a" stroke-width="1.2"/><path d="M34.5 20.5 l2 2 l2 -3" fill="none" stroke="#9a9a9a" stroke-width="1"/><line x1="47.5" y1="24.5" x2="55.5" y2="15.5" stroke="#d8d8d8" stroke-width="2.2" stroke-linecap="round"/><circle cx="58.5" cy="12.5" r="3.6" fill="#c8886a"/><circle cx="68.5" cy="17.5" r="6" fill="#000"/></svg>
<div style="left:839.5px;top:117px;width:122px;height:122px;border-radius:50%;background:conic-gradient(from 90deg,#ff0000,#ffff00,#00ff00,#00ffff,#0000ff,#ff00ff,#ff0000);"></div>
<div style="left:851.5px;top:129px;width:98px;height:98px;border-radius:50%;background:#383838;"></div>
<svg style="left:864px;top:134px;overflow:visible;" width="100" height="90" viewBox="0 0 100 90"><defs><linearGradient id="tgv" x1="0" y1="0" x2="0" y2="1"><stop offset="0" stop-color="#000"/><stop offset="1" stop-color="#fff"/></linearGradient><linearGradient id="tgr" x1="1" y1="0" x2="0" y2="0"><stop offset="0" stop-color="#ff1010" stop-opacity="1"/><stop offset="1" stop-color="#ff1010" stop-opacity="0"/></linearGradient></defs><polygon points="12,2 84.5,43.7 12,85.4" fill="url(#tgv)"/><polygon points="12,2 84.5,43.7 12,85.4" fill="url(#tgr)"/><circle cx="12" cy="2" r="3.6" fill="#000" stroke="#ddd" stroke-width="1.3"/><circle cx="91" cy="44" r="4" fill="#e82020" stroke="#eee" stroke-width="1.3"/></svg>
<div class="t" style="left:734px;top:204.4px;font-size:8.5px;color:#b0b0b0;">H: 0</div>
<div class="t" style="left:734px;top:215.4px;font-size:8.5px;color:#b0b0b0;">S: 0</div>
<div class="t" style="left:734px;top:226.4px;font-size:8.5px;color:#b0b0b0;">L: 0</div>
<div class="t" style="left:734px;top:239.6px;font-size:9px;color:#a8a8a8;">Opacity</div>
<svg style="left:733px;top:252px;" width="16" height="16" viewBox="0 0 16 16"><circle cx="7" cy="7" r="5" fill="#f0e0e0"/><line x1="4" y1="10" x2="10" y2="4" stroke="#d04a60" stroke-width="1.6"/></svg>
<div style="left:768px;top:255px;width:237px;height:1px;background:#333333;"></div>
<div class="t" style="left:1016px;top:232.4px;font-size:8.5px;color:#a0a0a0;">#:</div>
<div style="left:1013px;top:255px;width:11px;height:16px;background:#2e2e2e;border-radius:2px;"></div>
<div class="t" style="left:1016px;top:258.2px;font-size:8px;color:#a0a0a0;">1</div>
<div style="left:737px;top:309px;width:9px;height:9px;background:#2a2a2a;border-radius:2px;"></div>
<div class="t" style="left:749px;top:308.1px;font-size:9px;color:#c4c4c4;">Hide irrelevant features</div>
<svg style="left:735px;top:336px;" width="12" height="10" viewBox="0 0 12 10"><path d="M1 2 L5 6 L9 2" fill="none" stroke="#7a7a7a" stroke-width="1.2"/></svg>
<div style="left:748px;top:357px;width:9.5px;height:9.5px;background:#222;border-radius:2px;"></div>
<svg style="left:748px;top:357px;" width="10" height="10" viewBox="0 0 10 10"><path d="M2 5 L4.2 7.2 L8 2.5" fill="none" stroke="#eee" stroke-width="1.4"/></svg>
<div class="t" style="left:761px;top:356.9px;font-size:8.5px;color:#c8c8c8;font-style:italic;">Standard Ligatures</div>
<div class="t" style="left:1014px;top:352.4px;font-size:16px;color:#c8c8c8;">fi</div>
<svg style="left:735px;top:393px;" width="12" height="10" viewBox="0 0 12 10"><path d="M1 2 L5 6 L9 2" fill="none" stroke="#7a7a7a" stroke-width="1.2"/></svg>
<svg style="left:746px;top:413px;" width="12" height="12" viewBox="0 0 12 12"><circle cx="6" cy="6" r="5" fill="#232323"/><circle cx="6" cy="6" r="1.6" fill="#eee"/></svg>
<svg style="left:746px;top:433px;" width="12" height="12" viewBox="0 0 12 12"><circle cx="6" cy="6" r="5" fill="#2c2c2c"/></svg>
<svg style="left:746px;top:452.5px;" width="12" height="12" viewBox="0 0 12 12"><circle cx="6" cy="6" r="5" fill="#2c2c2c"/></svg>
<div class="t" style="left:761px;top:414.1px;font-size:9px;color:#c8c8c8;">Normal</div>
<div class="t" style="left:761px;top:434.1px;font-size:9px;color:#c8c8c8;font-style:italic;">Superscript</div>
<div class="t" style="left:761px;top:453.6px;font-size:9px;color:#c8c8c8;font-style:italic;">Subscript</div>
<div class="t" style="left:1014px;top:411.7px;font-size:13px;color:#c0c0c0;">(1</div>
<div class="t" style="left:1014px;top:431.7px;font-size:13px;color:#c0c0c0;">('</div>
<div class="t" style="left:1014px;top:451.2px;font-size:13px;color:#c0c0c0;">(1</div>
<div style="left:728px;top:470px;width:296px;height:16px;overflow:hidden"><div style="position:absolute;left:20px;top:10px;width:9.5px;height:9.5px;background:#2a2a2a;border-radius:2px"></div><div class="t" style="position:absolute;left:33px;top:10.5px;font-size:9px;color:#a8a8a8;font-style:italic">Fraction</div><div class="t" style="position:absolute;left:286px;top:8px;font-size:13px;color:#b0b0b0">1/</div></div>
<svg style="left:728px;top:512px;" width="100" height="50" viewBox="0 0 100 50"><circle cx="27.100000000000023" cy="27.5" r="10" fill="#fa5a2a"/><circle cx="18.600000000000023" cy="18" r="8" fill="none" stroke="#ffffff" stroke-width="3.2"/><line x1="14.600000000000023" y1="23" x2="23.600000000000023" y2="14" stroke="#e0506a" stroke-width="1"/><circle cx="10.600000000000023" cy="35" r="4.5" fill="#f2dede"/><line x1="7.600000000000023" y1="38" x2="13.600000000000023" y2="32" stroke="#d04a60" stroke-width="1.4"/><path d="M28.600000000000023 10 q7 1 8 8" fill="none" stroke="#9a9a9a" stroke-width="1.2"/><path d="M34.60000000000002 17 l2 2 l2 -3" fill="none" stroke="#9a9a9a" stroke-width="1"/><line x1="47.60000000000002" y1="21" x2="55.60000000000002" y2="12" stroke="#d8d8d8" stroke-width="2.2" stroke-linecap="round"/><circle cx="58.60000000000002" cy="9" r="3.6" fill="#c8886a"/><circle cx="68.60000000000002" cy="14" r="6" fill="#000"/></svg>
<div class="t" style="left:974px;top:528.1px;font-size:9px;color:#a8a8a8;">Opacity:</div>
<div style="left:1015px;top:524px;width:9px;height:20px;background:#2a2a2a;border-radius:2px 0 0 2px;"></div>
<div class="t" style="left:1017px;top:528.6px;font-size:9px;color:#c0c0c0;">10</div>
<div class="t" style="left:734px;top:567.3px;font-size:9px;color:#a8a8a8;">Recent:</div>
<div style="left:768px;top:567px;width:10px;height:10.5px;background:#9e7a6a;"></div>
<div style="left:779px;top:567px;width:10px;height:10.5px;background:#f25a2a;"></div>
<div style="left:790px;top:567px;width:10px;height:10.5px;background:#0e6fd8;"></div>
<div style="left:801px;top:567px;width:10px;height:10.5px;background:#10b82a;"></div>
<div style="left:812px;top:567px;width:10px;height:10.5px;background:#fcc800;"></div>
<div style="left:823px;top:567px;width:10px;height:10.5px;background:#000000;"></div>
<div style="left:834px;top:567px;width:10px;height:10.5px;background:#0b74d0;"></div>
<div style="left:845px;top:567px;width:10px;height:10.5px;background:#ee4a2a;"></div>
<div style="left:856px;top:567px;width:10px;height:10.5px;background:#4410e8;"></div>
<div style="left:867px;top:567px;width:10px;height:10.5px;background:#f0f0f0;"></div>
<div style="left:734px;top:585px;width:238px;height:16px;background:#444444;border-radius:2px;"></div>
<svg style="left:738px;top:586px;" width="14" height="14" viewBox="0 0 14 14"><rect x="1.5" y="6" width="7" height="4" rx="2" transform="rotate(-45 5 8)" fill="none" stroke="#cfcfcf" stroke-width="1.2"/><rect x="5.5" y="3" width="7" height="4" rx="2" transform="rotate(-45 9 5)" fill="none" stroke="#cfcfcf" stroke-width="1.2"/></svg>
<div class="t" style="left:754px;top:587.4px;font-size:9px;color:#d0d0d0;">Colours</div>
<svg style="left:963px;top:586px;" width="10" height="14" viewBox="0 0 10 14"><path d="M2 5 L4.5 2.5 L7 5 M2 9 L4.5 11.5 L7 9" fill="none" stroke="#888" stroke-width="1"/></svg>
<svg style="left:978px;top:584px;" width="18" height="18" viewBox="0 0 18 18"><rect x="2" y="2" width="5" height="5" rx="1" fill="#d0d0d0"/><rect x="2" y="9" width="5" height="5" rx="1" fill="#d0d0d0"/><rect x="9" y="9" width="5" height="5" rx="1" fill="#d0d0d0"/><path d="M11.5 1.5 v6 M8.5 4.5 h6" stroke="#d0d0d0" stroke-width="1.3"/></svg>
<div style="left:1020px;top:588px;width:4px;height:11px;background:#e8e8e8;"></div>
<div style="left:735.1px;top:606.1px;width:289px;height:55px;background:#2c2c2c;"></div>
<div style="left:735.1px;top:661.1px;width:187px;height:11px;background:#2c2c2c;"></div>
<div style="left:779.6px;top:606.6px;width:10px;height:10px;background:#ec1c1c;"></div>
<div style="left:790.6px;top:606.6px;width:10px;height:10px;background:#ec611c;"></div>
<div style="left:801.6px;top:606.6px;width:10px;height:10px;background:#eca71c;"></div>
<div style="left:812.6px;top:606.6px;width:10px;height:10px;background:#ecec1c;"></div>
<div style="left:823.6px;top:606.6px;width:10px;height:10px;background:#a7ec1c;"></div>
<div style="left:834.6px;top:606.6px;width:10px;height:10px;background:#61ec1c;"></div>
<div style="left:845.6px;top:606.6px;width:10px;height:10px;background:#1cec1c;"></div>
<div style="left:856.6px;top:606.6px;width:10px;height:10px;background:#1cec61;"></div>
<div style="left:867.6px;top:606.6px;width:10px;height:10px;background:#1ceca7;"></div>
<div style="left:878.6px;top:606.6px;width:10px;height:10px;background:#1cecec;"></div>
<div style="left:889.6px;top:606.6px;width:10px;height:10px;background:#1ca7ec;"></div>
<div style="left:900.6px;top:606.6px;width:10px;height:10px;background:#1c61ec;"></div>
<div style="left:911.6px;top:606.6px;width:10px;height:10px;background:#1c1cec;"></div>
<div style="left:922.6px;top:606.6px;width:10px;height:10px;background:#611cec;"></div>
<div style="left:933.6px;top:606.6px;width:10px;height:10px;background:#a71cec;"></div>
<div style="left:944.6px;top:606.6px;width:10px;height:10px;background:#ec1cec;"></div>
<div style="left:955.6px;top:606.6px;width:10px;height:10px;background:#ec1ca7;"></div>
<div style="left:966.6px;top:606.6px;width:10px;height:10px;background:#ec1c61;"></div>
<div style="left:977.6px;top:606.6px;width:10px;height:10px;background:#ec1c1c;"></div>
<div style="left:988.6px;top:606.6px;width:10px;height:10px;background:#ec611c;"></div>
<div style="left:999.6px;top:606.6px;width:10px;height:10px;background:#eca71c;"></div>
<div style="left:1010.6px;top:606.6px;width:10px;height:10px;background:#ecec1c;"></div>
<div style="left:735.6px;top:617.6px;width:10px;height:10px;background:#1fdf2f;"></div>
<div style="left:746.6px;top:617.6px;width:10px;height:10px;background:#1fdf7a;"></div>
<div style="left:757.6px;top:617.6px;width:10px;height:10px;background:#1fdfc5;"></div>
<div style="left:768.6px;top:617.6px;width:10px;height:10px;background:#1faddf;"></div>
<div style="left:779.6px;top:617.6px;width:10px;height:10px;background:#1f62df;"></div>
<div style="left:790.6px;top:617.6px;width:10px;height:10px;background:#271fdf;"></div>
<div style="left:801.6px;top:617.6px;width:10px;height:10px;background:#721fdf;"></div>
<div style="left:812.6px;top:617.6px;width:10px;height:10px;background:#bd1fdf;"></div>
<div style="left:823.6px;top:617.6px;width:10px;height:10px;background:#df1fb5;"></div>
<div style="left:834.6px;top:617.6px;width:10px;height:10px;background:#df1f6a;"></div>
<div style="left:845.6px;top:617.6px;width:10px;height:10px;background:#df1f1f;"></div>
<div style="left:856.6px;top:617.6px;width:10px;height:10px;background:#df6a1f;"></div>
<div style="left:867.6px;top:617.6px;width:10px;height:10px;background:#dfb51f;"></div>
<div style="left:878.6px;top:617.6px;width:10px;height:10px;background:#bddf1f;"></div>
<div style="left:889.6px;top:617.6px;width:10px;height:10px;background:#72df1f;"></div>
<div style="left:900.6px;top:617.6px;width:10px;height:10px;background:#27df1f;"></div>
<div style="left:911.6px;top:617.6px;width:10px;height:10px;background:#1fdf62;"></div>
<div style="left:922.6px;top:617.6px;width:10px;height:10px;background:#1fdfad;"></div>
<div style="left:933.6px;top:617.6px;width:10px;height:10px;background:#1fc5df;"></div>
<div style="left:944.6px;top:617.6px;width:10px;height:10px;background:#1f7adf;"></div>
<div style="left:955.6px;top:617.6px;width:10px;height:10px;background:#1f2fdf;"></div>
<div style="left:966.6px;top:617.6px;width:10px;height:10px;background:#5a1fdf;"></div>
<div style="left:977.6px;top:617.6px;width:10px;height:10px;background:#a51fdf;"></div>
<div style="left:988.6px;top:617.6px;width:10px;height:10px;background:#df1fcd;"></div>
<div style="left:999.6px;top:617.6px;width:10px;height:10px;background:#df1f82;"></div>
<div style="left:1010.6px;top:617.6px;width:10px;height:10px;background:#df1f37;"></div>
<div style="left:735.6px;top:628.6px;width:10px;height:10px;background:#c76e41;"></div>
<div style="left:746.6px;top:628.6px;width:10px;height:10px;background:#c79f41;"></div>
<div style="left:757.6px;top:628.6px;width:10px;height:10px;background:#bec741;"></div>
<div style="left:768.6px;top:628.6px;width:10px;height:10px;background:#8dc741;"></div>
<div style="left:779.6px;top:628.6px;width:10px;height:10px;background:#5cc741;"></div>
<div style="left:790.6px;top:628.6px;width:10px;height:10px;background:#41c757;"></div>
<div style="left:801.6px;top:628.6px;width:10px;height:10px;background:#41c789;"></div>
<div style="left:812.6px;top:628.6px;width:10px;height:10px;background:#41c7ba;"></div>
<div style="left:823.6px;top:628.6px;width:10px;height:10px;background:#41a4c7;"></div>
<div style="left:834.6px;top:628.6px;width:10px;height:10px;background:#4172c7;"></div>
<div style="left:845.6px;top:628.6px;width:10px;height:10px;background:#4141c7;"></div>
<div style="left:856.6px;top:628.6px;width:10px;height:10px;background:#7241c7;"></div>
<div style="left:867.6px;top:628.6px;width:10px;height:10px;background:#a441c7;"></div>
<div style="left:878.6px;top:628.6px;width:10px;height:10px;background:#c741ba;"></div>
<div style="left:889.6px;top:628.6px;width:10px;height:10px;background:#c74189;"></div>
<div style="left:900.6px;top:628.6px;width:10px;height:10px;background:#c74157;"></div>
<div style="left:911.6px;top:628.6px;width:10px;height:10px;background:#c75c41;"></div>
<div style="left:922.6px;top:628.6px;width:10px;height:10px;background:#c78d41;"></div>
<div style="left:933.6px;top:628.6px;width:10px;height:10px;background:#c7be41;"></div>
<div style="left:944.6px;top:628.6px;width:10px;height:10px;background:#9fc741;"></div>
<div style="left:955.6px;top:628.6px;width:10px;height:10px;background:#6ec741;"></div>
<div style="left:966.6px;top:628.6px;width:10px;height:10px;background:#41c745;"></div>
<div style="left:977.6px;top:628.6px;width:10px;height:10px;background:#41c777;"></div>
<div style="left:988.6px;top:628.6px;width:10px;height:10px;background:#41c7a8;"></div>
<div style="left:999.6px;top:628.6px;width:10px;height:10px;background:#41b5c7;"></div>
<div style="left:1010.6px;top:628.6px;width:10px;height:10px;background:#4184c7;"></div>
<div style="left:735.6px;top:639.6px;width:10px;height:10px;background:#8946b8;"></div>
<div style="left:746.6px;top:639.6px;width:10px;height:10px;background:#ad46b8;"></div>
<div style="left:757.6px;top:639.6px;width:10px;height:10px;background:#b846a0;"></div>
<div style="left:768.6px;top:639.6px;width:10px;height:10px;background:#b8467b;"></div>
<div style="left:779.6px;top:639.6px;width:10px;height:10px;background:#b84657;"></div>
<div style="left:790.6px;top:639.6px;width:10px;height:10px;background:#b85946;"></div>
<div style="left:801.6px;top:639.6px;width:10px;height:10px;background:#b87d46;"></div>
<div style="left:812.6px;top:639.6px;width:10px;height:10px;background:#b8a146;"></div>
<div style="left:823.6px;top:639.6px;width:10px;height:10px;background:#abb846;"></div>
<div style="left:834.6px;top:639.6px;width:10px;height:10px;background:#87b846;"></div>
<div style="left:845.6px;top:639.6px;width:10px;height:10px;background:#62b846;"></div>
<div style="left:856.6px;top:639.6px;width:10px;height:10px;background:#46b84d;"></div>
<div style="left:867.6px;top:639.6px;width:10px;height:10px;background:#46b872;"></div>
<div style="left:878.6px;top:639.6px;width:10px;height:10px;background:#46b896;"></div>
<div style="left:889.6px;top:639.6px;width:10px;height:10px;background:#46b6b8;"></div>
<div style="left:900.6px;top:639.6px;width:10px;height:10px;background:#4692b8;"></div>
<div style="left:911.6px;top:639.6px;width:10px;height:10px;background:#466eb8;"></div>
<div style="left:922.6px;top:639.6px;width:10px;height:10px;background:#4649b8;"></div>
<div style="left:933.6px;top:639.6px;width:10px;height:10px;background:#6646b8;"></div>
<div style="left:944.6px;top:639.6px;width:10px;height:10px;background:#8a46b8;"></div>
<div style="left:955.6px;top:639.6px;width:10px;height:10px;background:#af46b8;"></div>
<div style="left:966.6px;top:639.6px;width:10px;height:10px;background:#b8469e;"></div>
<div style="left:977.6px;top:639.6px;width:10px;height:10px;background:#b84679;"></div>
<div style="left:988.6px;top:639.6px;width:10px;height:10px;background:#b84655;"></div>
<div style="left:999.6px;top:639.6px;width:10px;height:10px;background:#b85b46;"></div>
<div style="left:1010.6px;top:639.6px;width:10px;height:10px;background:#b87f46;"></div>
<div style="left:735.6px;top:650.6px;width:10px;height:10px;background:#56a864;"></div>
<div style="left:746.6px;top:650.6px;width:10px;height:10px;background:#56a881;"></div>
<div style="left:757.6px;top:650.6px;width:10px;height:10px;background:#56a89e;"></div>
<div style="left:768.6px;top:650.6px;width:10px;height:10px;background:#5694a8;"></div>
<div style="left:779.6px;top:650.6px;width:10px;height:10px;background:#5677a8;"></div>
<div style="left:790.6px;top:650.6px;width:10px;height:10px;background:#565aa8;"></div>
<div style="left:801.6px;top:650.6px;width:10px;height:10px;background:#7056a8;"></div>
<div style="left:812.6px;top:650.6px;width:10px;height:10px;background:#8d56a8;"></div>
<div style="left:823.6px;top:650.6px;width:10px;height:10px;background:#a856a5;"></div>
<div style="left:834.6px;top:650.6px;width:10px;height:10px;background:#a85688;"></div>
<div style="left:845.6px;top:650.6px;width:10px;height:10px;background:#a8566b;"></div>
<div style="left:856.6px;top:650.6px;width:10px;height:10px;background:#a85f56;"></div>
<div style="left:867.6px;top:650.6px;width:10px;height:10px;background:#a87c56;"></div>
<div style="left:878.6px;top:650.6px;width:10px;height:10px;background:#a89a56;"></div>
<div style="left:889.6px;top:650.6px;width:10px;height:10px;background:#99a856;"></div>
<div style="left:900.6px;top:650.6px;width:10px;height:10px;background:#7ca856;"></div>
<div style="left:911.6px;top:650.6px;width:10px;height:10px;background:#5ea856;"></div>
<div style="left:922.6px;top:650.6px;width:10px;height:10px;background:#56a86b;"></div>
<div style="left:933.6px;top:650.6px;width:10px;height:10px;background:#56a889;"></div>
<div style="left:944.6px;top:650.6px;width:10px;height:10px;background:#56a8a6;"></div>
<div style="left:955.6px;top:650.6px;width:10px;height:10px;background:#568da8;"></div>
<div style="left:966.6px;top:650.6px;width:10px;height:10px;background:#566fa8;"></div>
<div style="left:977.6px;top:650.6px;width:10px;height:10px;background:#5a56a8;"></div>
<div style="left:988.6px;top:650.6px;width:10px;height:10px;background:#7856a8;"></div>
<div style="left:999.6px;top:650.6px;width:10px;height:10px;background:#9556a8;"></div>
<div style="left:1010.6px;top:650.6px;width:10px;height:10px;background:#a8569e;"></div>
<div style="left:735.6px;top:661.6px;width:10px;height:10px;background:#90746e;"></div>
<div style="left:746.6px;top:661.6px;width:10px;height:10px;background:#907f6e;"></div>
<div style="left:757.6px;top:661.6px;width:10px;height:10px;background:#908a6e;"></div>
<div style="left:768.6px;top:661.6px;width:10px;height:10px;background:#8a906e;"></div>
<div style="left:779.6px;top:661.6px;width:10px;height:10px;background:#7f906e;"></div>
<div style="left:790.6px;top:661.6px;width:10px;height:10px;background:#74906e;"></div>
<div style="left:801.6px;top:661.6px;width:10px;height:10px;background:#6e9074;"></div>
<div style="left:812.6px;top:661.6px;width:10px;height:10px;background:#6e907f;"></div>
<div style="left:823.6px;top:661.6px;width:10px;height:10px;background:#6e908a;"></div>
<div style="left:834.6px;top:661.6px;width:10px;height:10px;background:#6e8a90;"></div>
<div style="left:845.6px;top:661.6px;width:10px;height:10px;background:#6e7f90;"></div>
<div style="left:856.6px;top:661.6px;width:10px;height:10px;background:#6e7490;"></div>
<div style="left:867.6px;top:661.6px;width:10px;height:10px;background:#746e90;"></div>
<div style="left:878.6px;top:661.6px;width:10px;height:10px;background:#7f6e90;"></div>
<div style="left:889.6px;top:661.6px;width:10px;height:10px;background:#8a6e90;"></div>
<div style="left:900.6px;top:661.6px;width:10px;height:10px;background:#906e8a;"></div>
<div style="left:911.6px;top:661.6px;width:10px;height:10px;background:#906e7f;"></div>
<div style="left:735.6px;top:606.6px;width:10px;height:10px;background:radial-gradient(circle at 50% 50%,#ffd000 0,#ff9a10 35%,#e06a10 100%);"></div>
<div style="left:746.6px;top:606.6px;width:10px;height:10px;background:#ffffff;"></div>
<svg style="left:746.6px;top:606.6px;" width="10" height="10" viewBox="0 0 10 10"><line x1="0" y1="10" x2="10" y2="0" stroke="#e04a4a" stroke-width="0.8"/></svg>
<div style="left:757.6px;top:606.6px;width:21px;height:10px;background:linear-gradient(90deg,#3a2010 0,#e0a070 15%,#5a3010 30%,#e0a070 45%,#2a1508 55%,#f0b080 72%,#5a3010 85%,#d09060 100%);"></div>
<div style="left:734px;top:730px;width:290px;height:16px;background:#262626;border-radius:2px;"></div>
<svg style="left:739px;top:732px;" width="12" height="12" viewBox="0 0 12 12"><circle cx="5" cy="5" r="3.2" fill="none" stroke="#bdbdbd" stroke-width="1.3"/><line x1="7.3" y1="7.3" x2="10" y2="10" stroke="#bdbdbd" stroke-width="1.4"/></svg>
<div class="t" style="left:750px;width:300px;text-align:center;top:790.6px;font-size:9px;color:#b8b8b8;">Current plane</div>
<div style="left:922.7px;top:812px;width:38px;height:46px;background:#262626;border-radius:2px;"></div>
<svg style="left:838px;top:810px;" width="130" height="35" viewBox="0 0 130 35"><polygon points="20,7.600000000000023 27.83,12.100000000000023 20,16.600000000000023 12.17,12.100000000000023" fill="#f4f4f4"/><polygon points="12.17,12.100000000000023 20,16.600000000000023 20,25.600000000000023 12.17,21.100000000000023" fill="#e0e0e0"/><polygon points="27.83,12.100000000000023 20,16.600000000000023 20,25.600000000000023 27.83,21.100000000000023" fill="#3b9ae8"/><polygon points="62,7.600000000000023 69.83,12.100000000000023 62,16.600000000000023 54.17,12.100000000000023" fill="#f4f4f4"/><polygon points="54.17,12.100000000000023 62,16.600000000000023 62,25.600000000000023 54.17,21.100000000000023" fill="#3b9ae8"/><polygon points="69.83,12.100000000000023 62,16.600000000000023 62,25.600000000000023 69.83,21.100000000000023" fill="#c8c8c8"/><polygon points="104,7.600000000000023 111.83,12.100000000000023 104,16.600000000000023 96.17,12.100000000000023" fill="#3b9ae8"/><polygon points="96.17,12.100000000000023 104,16.600000000000023 104,25.600000000000023 96.17,21.100000000000023" fill="#e0e0e0"/><polygon points="111.83,12.100000000000023 104,16.600000000000023 104,25.600000000000023 111.83,21.100000000000023" fill="#c8c8c8"/></svg>
<div class="t" style="left:708px;width:300px;text-align:center;top:845.1px;font-size:9px;color:#c8c8c8;">Front</div>
<div class="t" style="left:750px;width:300px;text-align:center;top:845.1px;font-size:9px;color:#c8c8c8;">Side</div>
<div class="t" style="left:792px;width:300px;text-align:center;top:845.1px;font-size:9px;color:#e0e0e0;">Top</div>
<div class="t" style="left:750px;width:300px;text-align:center;top:875.6px;font-size:9px;color:#b0b0b0;">Plane editing options</div>
<div class="t" style="left:841px;top:898.6px;font-size:9px;color:#c4c4c4;">Edit in plane</div>
<svg style="left:819px;top:895.0px;" width="18" height="18" viewBox="0 0 18 18"><path d="M2 2 v13 l-1 1 M1 16 h4 M2 15 l12 -4" fill="none" stroke="#bdbdbd" stroke-width="1"/><path d="M9 1 l1.3 3 3 .2 -2.3 2 .8 3 -2.8-1.6 -2.8 1.6 .8-3 -2.3-2 3-.2z" fill="#d8d8d8"/><path d="M11 11 l3 1.5 -3 1.5z" fill="#d8d8d8"/></svg>
<div class="t" style="left:841px;top:921.4px;font-size:9px;color:#c4c4c4;">Fit to plane</div>
<svg style="left:819px;top:917.8px;" width="18" height="18" viewBox="0 0 18 18"><path d="M2 2 v13 l-1 1 M1 16 h4 M2 15 l12 -4" fill="none" stroke="#bdbdbd" stroke-width="1"/><rect x="5" y="3" width="6" height="9" rx="1" fill="none" stroke="#cfcfcf" stroke-width="1"/><rect x="8" y="8" width="6" height="6" fill="#bdbdbd"/></svg>
<div class="t" style="left:841px;top:944.2px;font-size:9px;color:#c4c4c4;">Flip horizontal in plane</div>
<svg style="left:819px;top:940.6px;" width="18" height="18" viewBox="0 0 18 18"><path d="M2 2 v13 l-1 1 M1 16 h4 M2 15 l12 -4" fill="none" stroke="#bdbdbd" stroke-width="1"/><path d="M8 3 l0 9 -4 1z" fill="#d8d8d8"/><path d="M9 3 l4 8 -4 1z" fill="#9a9a9a"/></svg>
<div class="t" style="left:841px;top:967.0px;font-size:9px;color:#c4c4c4;">Flip vertical in plane</div>
<svg style="left:819px;top:963.4px;" width="18" height="18" viewBox="0 0 18 18"><path d="M2 2 v13 l-1 1 M1 16 h4 M2 15 l12 -4" fill="none" stroke="#bdbdbd" stroke-width="1"/><path d="M5 6 l8 -3 0 3z" fill="#d8d8d8"/><path d="M5 9 l8 -2 0 3z" fill="#9a9a9a"/></svg>
<div class="t" style="left:841px;top:989.8px;font-size:9px;color:#c4c4c4;">Rotate counter-clockwise in plane</div>
<svg style="left:819px;top:986.2px;" width="18" height="18" viewBox="0 0 18 18"><path d="M2 2 v13 l-1 1 M1 16 h4 M2 15 l12 -4" fill="none" stroke="#bdbdbd" stroke-width="1"/><path d="M5 5 h5 v8 h-5z" fill="#d8d8d8"/><path d="M10 3 a4 4 0 0 1 4 4" fill="none" stroke="#cfcfcf" stroke-width="1.2"/></svg>
<div class="t" style="left:841px;top:1012.6px;font-size:9px;color:#c4c4c4;">Rotate clockwise in plane</div>
<svg style="left:819px;top:1009.0px;" width="18" height="18" viewBox="0 0 18 18"><path d="M2 2 v13 l-1 1 M1 16 h4 M2 15 l12 -4" fill="none" stroke="#bdbdbd" stroke-width="1"/><path d="M5 5 h5 v8 h-5z" fill="#d8d8d8"/><path d="M10 3 a4 4 0 0 1 4 4" fill="none" stroke="#cfcfcf" stroke-width="1.2"/></svg>
</body></html>
